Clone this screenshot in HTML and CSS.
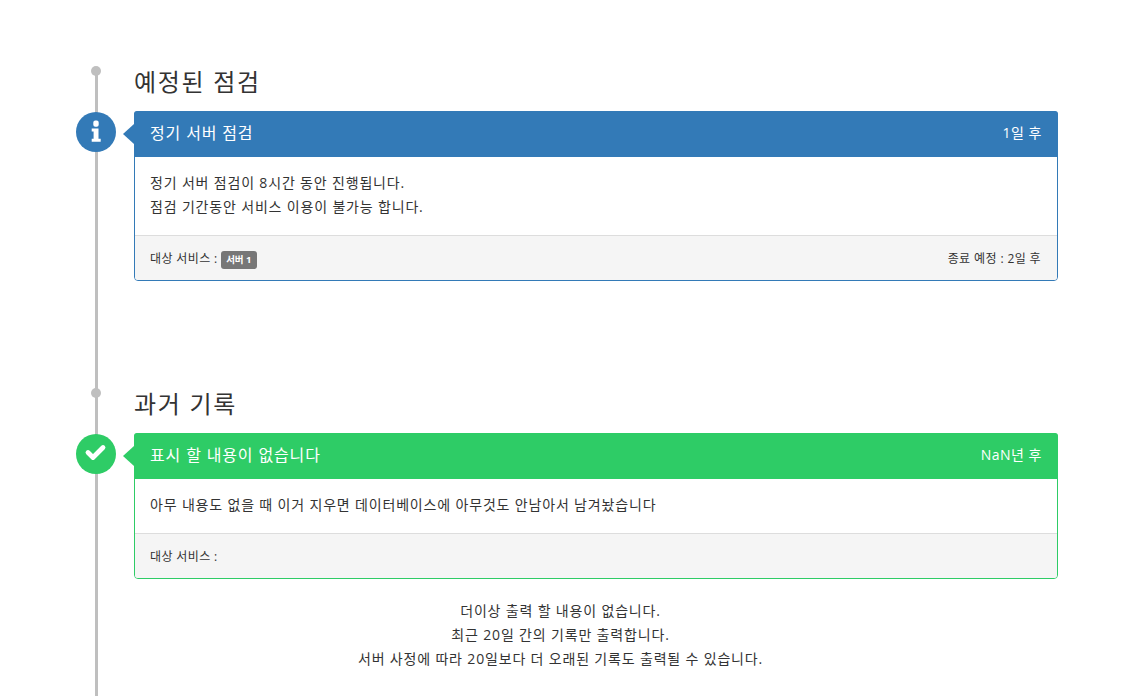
FILE: index.html
```html
<!DOCTYPE html>
<html lang="ko">
<head>
<meta charset="utf-8">
<title>서버 점검</title>
<link rel="stylesheet" href="styles.css">
</head>
<body>
<main class="timeline">
  <section class="group group-first">
    <h2 class="group-title"><span class="dot"></span>예정된 점검</h2>
    <article class="panel panel-blue">
      <span class="badge badge-blue">
        <svg class="icon" viewBox="0 0 40 40"><path fill="#fff" d="M17.3 10.500a2 2 0 0 1 2-2h1.400a2 2 0 0 1 2 2v2.200a2 2 0 0 1-2 2h-1.400a2 2 0 0 1-2-2zM15.700 16.500h6.800v10.200h2.200v3H15.700v-3h1.900v-7.200h-1.900z"/></svg>
      </span>
      <header class="panel-head"><span>정기 서버 점검</span><span class="head-time">1일 후</span></header>
      <div class="panel-body">
        <p>정기 서버 점검이 8시간 동안 진행됩니다.</p>
        <p>점검 기간동안 서비스 이용이 불가능 합니다.</p>
      </div>
      <footer class="panel-foot"><span>대상 서비스 : <b class="tag">서버 1</b></span><span>종료 예정 : 2일 후</span></footer>
    </article>
  </section>
  <section class="group group-second">
    <h2 class="group-title"><span class="dot"></span>과거 기록</h2>
    <article class="panel panel-green">
      <span class="badge badge-green">
        <svg class="icon" viewBox="0 0 40 40"><path fill="none" stroke="#fff" stroke-width="4.800" stroke-linecap="round" stroke-linejoin="round" d="M12 18.500l5 5 10-10"/></svg>
      </span>
      <header class="panel-head"><span>표시 할 내용이 없습니다</span><span class="head-time">NaN년 후</span></header>
      <div class="panel-body">
        <p>아무 내용도 없을 때 이거 지우면 데이터베이스에 아무것도 안남아서 남겨놨습니다</p>
      </div>
      <footer class="panel-foot"><span>대상 서비스 :</span></footer>
    </article>
  </section>
  <div class="end-note">
    <p>더이상 출력 할 내용이 없습니다.</p>
    <p>최근 20일 간의 기록만 출력합니다.</p>
    <p>서버 사정에 따라 20일보다 더 오래된 기록도 출력될 수 있습니다.</p>
  </div>
</main>
</body>
</html>
```
FILE: styles.css
```css
* { box-sizing: border-box; }
html, body { margin: 0; height: 100%; overflow: hidden; background: #fff; }
body {
  font-family: "Open Sans", "Noto Sans CJK KR", sans-serif;
  font-size: 14px;
  line-height: 24px;
  letter-spacing: 0.83px;
  color: #333;
}
.timeline {
  position: relative;
  width: 924px;
  margin-left: 134px;
  height: 696px;
}
.timeline::before {
  content: "";
  position: absolute;
  left: -39px;
  top: 71px;
  bottom: 0;
  width: 3px;
  background: #bfbfbf;
}
.group { position: relative; }
.group-first { padding-top: 64px; }
.group-second { padding-top: 105px; }
.group-title {
  position: relative;
  margin: 0 0 11px;
  height: 36px;
  font-size: 24px;
  font-weight: 400;
  line-height: 36px;
  letter-spacing: 1.7px;
  color: #333;
}
.dot {
  position: absolute;
  left: -43px;
  top: 2px;
  width: 10px;
  height: 10px;
  border-radius: 50%;
  background: #bfbfbf;
}
.panel {
  position: relative;
  border: 1px solid;
  border-radius: 4px;
  background: #fff;
}
.panel-blue { border-color: #337ab7; }
.panel-green { border-color: #2ecc66; }
.panel::before {
  content: "";
  position: absolute;
  left: -12px;
  top: 12px;
  border-style: solid;
  border-width: 10px 11px 10px 0;
  border-color: transparent;
}
.panel-blue::before { border-right-color: #337ab7; }
.panel-green::before { border-right-color: #2ecc66; }
.badge {
  position: absolute;
  left: -59px;
  top: 0;
  width: 40px;
  height: 40px;
  border-radius: 50%;
  display: flex;
}
.badge-blue { background: #337ab7; }
.badge-green { background: #2ecc66; }
.icon { width: 40px; height: 40px; }
.panel-head {
  display: flex;
  justify-content: space-between;
  align-items: center;
  height: 46px;
  margin: -1px -1px 0;
  padding: 0 16px 2px 16px;
  border-radius: 3px 3px 0 0;
  color: #fff;
  font-size: 16px;
  letter-spacing: 0.85px;
}
.panel-blue .panel-head { background: #337ab7; }
.panel-green .panel-head { background: #2ecc66; }
.head-time { font-size: 14px; letter-spacing: 0.5px; }
.panel-body { padding: 14px 15px 16px; }
.panel-body p { margin: 0; }
.panel-foot {
  display: flex;
  justify-content: space-between;
  align-items: center;
  height: 45px;
  padding: 2px 16px 0 15px;
  border-top: 1px solid #ddd;
  border-radius: 0 0 3px 3px;
  background: #f5f5f5;
  font-size: 12px;
  letter-spacing: 0.38px;
}
.tag {
  display: inline-block;
  padding: 0 5px;
  border-radius: 3px;
  background: #777;
  color: #fff;
  font-size: 9.500px;
  font-weight: 700;
  line-height: 18px;
  letter-spacing: 0;
  vertical-align: middle;
}
.end-note { margin: 20px 0 0 -71px; text-align: center; }
.end-note p { margin: 0; }
```
